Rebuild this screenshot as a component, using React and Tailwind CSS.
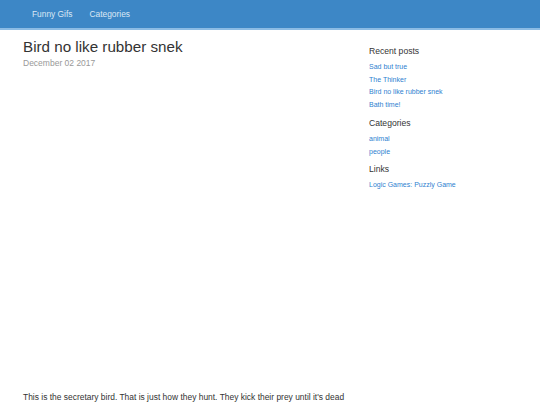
import React from "react";

const recentPosts = ["Sad but true", "The Thinker", "Bird no like rubber snek", "Bath time!"];
const categories = ["animal", "people"];
const links = ["Logic Games: Puzzly Game"];

const SideBlock = ({ title, items }) => (
  <div className="mb-[5px]">
    <h4 className="text-[8.6px] leading-[12px] text-[#333] mb-[4px]">{title}</h4>
    <ul>
      {items.map((item) => (
        <li key={item} className="text-[7px] leading-[12.7px]">
          <a href="#" className="text-[#2f7fd0]">{item}</a>
        </li>
      ))}
    </ul>
  </div>
);

export default function App() {
  return (
    <div className="min-h-[405px] bg-white font-['Liberation_Sans',Arial,sans-serif]">
      <nav className="h-[30px] bg-[#3d87c6] border-b-[2px] border-[#8cbce4] flex items-center pl-[32px] gap-[17px] text-[8.4px] text-[#dbe8f5]">
        <a href="#">Funny Gifs</a>
        <a href="#">Categories</a>
      </nav>

      <div className="flex pl-[23px]">
        <main className="w-[346px]">
          <h1 className="text-[15.2px] leading-[18px] text-[#333] mt-[8px]">Bird no like rubber snek</h1>
          <p className="text-[8.5px] text-[#999] mt-[1px]">December 02 2017</p>
          <div className="h-[321px]" />
          <p className="text-[8.45px] text-[#333]">
            This is the secretary bird. That is just how they hunt. They kick their prey until it's dead
          </p>
        </main>

        <aside className="w-[150px] pt-[15px]">
          <SideBlock title="Recent posts" items={recentPosts} />
          <SideBlock title="Categories" items={categories} />
          <SideBlock title="Links" items={links} />
        </aside>
      </div>
    </div>
  );
}
